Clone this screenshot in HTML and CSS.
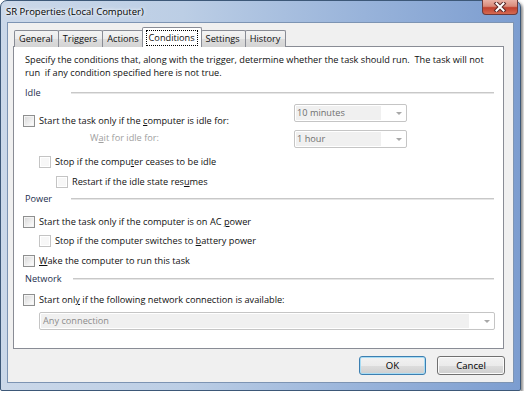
FILE: index.html
```html
<!DOCTYPE html>
<html lang="en">
<head>
    <meta charset="UTF-8">
    <title>SR Properties (Local Computer)</title>
    <link rel="stylesheet" href="styles.css">
</head>
<body>
<div class="window">
    <div class="titlebar">
        <span class="title">SR Properties (Local Computer)</span>
        <span class="close">
            <svg width="14" height="10" viewBox="0 0 14 10">
                <path d="M3.5 1.5 L10.5 8.5 M10.5 1.5 L3.5 8.5" stroke="#5a2a2a" stroke-width="4" stroke-linecap="square"/>
                <path d="M3.5 1.5 L10.5 8.5 M10.5 1.5 L3.5 8.5" stroke="#ffffff" stroke-width="2" stroke-linecap="square"/>
            </svg>
        </span>
    </div>
    <div class="client">
        <div class="tabs">
            <span class="tab">General</span>
            <span class="tab">Triggers</span>
            <span class="tab">Actions</span>
            <span class="tab active"><span class="focus">Conditions</span></span>
            <span class="tab">Settings</span>
            <span class="tab">History</span>
        </div>
        <div class="panel">
            <p class="desc">Specify the conditions that, along with the trigger, determine whether the task should run.&nbsp; The task will not<br>run&nbsp; if any condition specified here is not true.</p>

            <div class="group g-idle"><span class="group-label">Idle</span><span class="rule"></span></div>
            <div class="row row-idle">
                <label class="check"><span class="box"></span><span>Start the task only if the <u>c</u>omputer is idle for:</span></label>
                <div class="select"><span class="value">10 minutes</span><span class="arrow"></span></div>
            </div>
            <div class="row row-wait">
                <span class="muted wait">W<u>a</u>it for idle for:</span>
                <div class="select"><span class="value">1 hour</span><span class="arrow"></span></div>
            </div>
            <label class="check lvl1 r-stop"><span class="box off"></span><span>Stop if the compu<u>t</u>er ceases to be idle</span></label>
            <label class="check lvl2 r-restart"><span class="box off"></span><span>Restart if the idle state res<u>u</u>mes</span></label>

            <div class="group g-power"><span class="group-label">Power</span><span class="rule"></span></div>
            <label class="check r-ac"><span class="box"></span><span>Start the task only if the computer is on AC <u>p</u>ower</span></label>
            <label class="check lvl1 r-battery"><span class="box off"></span><span>Stop if the computer switches to <u>b</u>attery power</span></label>
            <label class="check r-wake"><span class="box"></span><span><u>W</u>ake the computer to run this task</span></label>

            <div class="group g-network"><span class="group-label">Network</span><span class="rule"></span></div>
            <label class="check r-net"><span class="box"></span><span>Start onl<u>y</u> if the following network connection is available:</span></label>
            <div class="select wide"><span class="value">Any connection</span><span class="arrow"></span></div>
        </div>
        <div class="buttons">
            <button class="btn ok">OK</button>
            <button class="btn">Cancel</button>
        </div>
    </div>
</div>
</body>
</html>
```

FILE: styles.css
```css
body {
    margin: 0;
    background: #ffffff;
    font-family: "Open Sans", "Noto Sans", sans-serif;
    font-size: 9.2px;
    color: #101010;
}
.window {
    box-sizing: border-box;
    width: 521px;
    height: 391px;
    border: 1px solid #3d5878;
    border-radius: 7px 7px 2px 2px;
    background: linear-gradient(to right, #cbd8e9 0%, #bccee5 35%, #98b3da 70%, #7c9dd0 100%);
    box-shadow: 2px 2px 3px rgba(0, 0, 0, 0.45);
}
.titlebar {
    height: 21px;
    display: flex;
    justify-content: space-between;
    align-items: flex-start;
}
.title {
    margin: 4px 0 0 5px;
    font-size: 9.5px;
    color: #000000;
    text-shadow: 0 0 5px #ffffff, 0 0 3px #ffffff;
}
.close {
    margin: -1px 2px 0 0;
    width: 36px;
    height: 15px;
    box-sizing: border-box;
    border: 1px solid #6e3a3a;
    border-top: none;
    border-radius: 0 0 4px 4px;
    background: linear-gradient(#eab2a6 0%, #d98a7a 45%, #c0402e 55%, #d56a52 100%);
    display: flex;
    justify-content: center;
    align-items: center;
}
.client {
    margin: 0 6px 0 6px;
    height: 361px;
    box-sizing: border-box;
    border: 1px solid #7d94b3;
    background: #f0f0f0;
    padding: 5px 0 0 5px;
}
.tabs {
    display: flex;
    height: 19px;
    align-items: flex-end;
    padding-left: 1px;
}
.tab {
    box-sizing: border-box;
    height: 17px;
    padding: 0 5px 0 4px;
    margin-right: -1px;
    border: 1px solid #898c95;
    border-bottom: none;
    border-radius: 2px 2px 0 0;
    background: linear-gradient(#f3f3f3 0%, #ebebeb 50%, #dddddd 51%, #d4d4d4 100%);
    line-height: 16px;
}
.tab.active {
    height: 20px;
    margin: 0 -1px 0 -2px;
    padding: 2px 3px 0 3px;
    background: #ffffff;
    position: relative;
    z-index: 1;
}
.focus {
    display: block;
    border: 1px dotted #000000;
    line-height: 14px;
    padding: 0 2px;
}
.panel {
    box-sizing: border-box;
    width: 491px;
    height: 303px;
    margin-top: -1px;
    border: 1px solid #898c95;
    background: #ffffff;
    padding: 6px 9px 0 9px;
}
.desc {
    margin: 0 0 0 2px;
    line-height: 13px;
    white-space: nowrap;
}
.group {
    display: flex;
    align-items: center;
    height: 13px;
    color: #1e2f4e;
}
.group-label {
    box-sizing: border-box;
    min-width: 48px;
    padding: 0 11px 0 2px;
}
.rule {
    flex: 1;
    height: 0;
    border-top: 1px solid #c8c8c8;
    border-bottom: 1px solid #e6e6e6;
}
.check {
    display: flex;
    align-items: center;
    height: 13px;
    line-height: 13px;
    white-space: nowrap;
}
.box {
    box-sizing: border-box;
    flex: none;
    width: 12px;
    height: 12px;
    margin-right: 4px;
    border: 1px solid #8e8f8f;
    background: linear-gradient(135deg, #d6d6d6 0%, #f4f4f4 70%, #ffffff 100%);
    box-shadow: inset 0 0 0 1px #f4f4f4;
}
.box.off {
    border-color: #c4c4c4;
    background: #f7f7f7;
    box-shadow: inset 0 0 0 1px #ffffff;
}
.lvl1 {
    margin-left: 16px;
}
.lvl2 {
    margin-left: 33px;
}
.muted {
    color: #a0a0a0;
}
.row {
    display: grid;
    grid-template-columns: 271px 113px;
    height: 18px;
}
.row-idle {
    align-items: end;
    margin-top: 5px;
}
.row-idle .check {
    margin-bottom: -5px;
}
.row-wait {
    margin-top: 8px;
}
.wait {
    padding-left: 67px;
    line-height: 13px;
    margin-top: 1px;
}
.select {
    box-sizing: border-box;
    height: 18px;
    border: 1px solid #c5c5c5;
    border-radius: 2px;
    background: #ffffff;
    display: flex;
    align-items: stretch;
    padding: 1px;
}
.select .value {
    flex: 1;
    background: #f0f0f0;
    color: #6f6f6f;
    line-height: 14px;
    padding-left: 1px;
    margin-right: 15px;
}
.arrow {
    align-self: center;
    width: 0;
    height: 0;
    margin-right: 3px;
    border-left: 3px solid transparent;
    border-right: 3px solid transparent;
    border-top: 3px solid #a8a8a8;
}
.select.wide {
    width: 456px;
    margin: 6px 0 0 16px;
}
.select.wide .value {
    padding-left: 2px;
    color: #8c8c8c;
}
.g-idle { margin-top: 7px; }
.r-stop { margin-top: 7px; }
.r-restart { margin-top: 7px; }
.g-power { margin-top: 4px; }
.r-ac { margin-top: 10px; }
.r-battery { margin-top: 6px; }
.r-wake { margin-top: 7px; }
.g-network { margin-top: 5px; }
.r-net { margin-top: 8px; }
.buttons {
    display: flex;
    justify-content: flex-end;
    gap: 11px;
    width: 492px;
    margin-top: 7px;
}
.btn {
    box-sizing: border-box;
    width: 68px;
    height: 19px;
    border: 1px solid #707070;
    border-radius: 3px;
    background: linear-gradient(#f2f2f2 0%, #ebebeb 50%, #dddddd 51%, #cfcfcf 100%);
    box-shadow: inset 0 0 0 1px #fbfbfb;
    font-family: "Open Sans", "Noto Sans", sans-serif;
    font-size: 9.6px;
    color: #000000;
    padding: 0;
}
.btn.ok {
    border-color: #3c7fb1;
    box-shadow: inset 0 0 0 1px #a8dcf4;
    width: 67px;
}
u {
    text-decoration-thickness: 1px;
    text-underline-offset: 1px;
}
```
